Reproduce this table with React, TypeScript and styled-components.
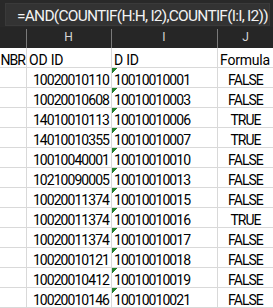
import React from "react";
import styled, { createGlobalStyle } from "styled-components";

const Global = createGlobalStyle`
  html, body { margin: 0; padding: 0; background: #ffffff; overflow: hidden; }
  body { font-family: Roboto, "Liberation Sans", sans-serif; }
`;

const COLS = "26px 85px 106px 57px";

const Page = styled.div`
  width: 273px;
  height: 308px;
  overflow: hidden;
  display: flex;
  flex-direction: column;
`;

const TopBar = styled.div`
  height: 31px;
  box-sizing: border-box;
  background: #292929;
  padding: 3px 3px 1px 5px;
  display: flex;
`;

const FormulaBox = styled.div`
  flex: 1;
  background: #333333;
  border: 1px solid #3a3a3a;
  box-sizing: border-box;
  display: flex;
  align-items: center;
  padding: 3px 0 0 11px;
  color: #f2f2f2;
  font-family: Roboto, "Liberation Sans", sans-serif;
  font-size: 15.5px;
  letter-spacing: -0.75px;
  white-space: nowrap;
  overflow: hidden;
`;

const HeaderRow = styled.div`
  height: 28px;
  background: #262626;
  display: grid;
  grid-template-columns: ${COLS};
`;

const HeaderCell = styled.div<{ $line?: boolean }>`
  display: flex;
  align-items: flex-end;
  justify-content: center;
  padding-bottom: 5px;
  box-sizing: border-box;
  color: #d6d6d6;
  font-size: 12px;
  line-height: 12px;
  background: ${(p) =>
    p.$line
      ? "linear-gradient(#7a7a7a, #7a7a7a) left bottom / 1px 19px no-repeat"
      : "none"};
`;

const Grid = styled.div`
  display: grid;
  grid-template-columns: ${COLS};
  grid-auto-rows: 20px;
`;

type Align = "left" | "right" | "center" | "end";

const Cell = styled.div<{
  $align: Align;
  $first?: boolean;
  $flag?: boolean;
  $label?: boolean;
}>`
  box-sizing: border-box;
  border-bottom: 1px solid #d9d9d9;
  border-left: ${(p) => (p.$first ? "none" : "1px solid #d9d9d9")};
  display: flex;
  align-items: flex-end;
  justify-content: ${(p) =>
    p.$align === "right" || p.$align === "end"
      ? "flex-end"
      : p.$align === "center"
      ? "center"
      : "flex-start"};
  padding: 0 ${(p) => (p.$align === "right" ? "2px" : "1px")} 0
    ${(p) => (p.$align === "left" ? "2px" : "0")};
  overflow: hidden;
  white-space: nowrap;
  color: #000000;
  font-size: 14px;
  line-height: 14px;
  letter-spacing: ${(p) => (p.$label ? "-0.2px" : "-0.95px")};
  background: ${(p) =>
    p.$flag
      ? "linear-gradient(135deg, #22802c 0 3.6px, transparent 3.6px) left top / 6px 6px no-repeat"
      : "none"};
`;

const rows: [string, string, string][] = [
  ["10020010110", "10010010001", "FALSE"],
  ["10020010608", "10010010003", "FALSE"],
  ["14010010113", "10010010006", "TRUE"],
  ["14010010355", "10010010007", "TRUE"],
  ["10010040001", "10010010010", "FALSE"],
  ["10210090005", "10010010013", "FALSE"],
  ["10020011374", "10010010015", "FALSE"],
  ["10020011374", "10010010016", "TRUE"],
  ["10020011374", "10010010017", "FALSE"],
  ["10020010121", "10010010018", "FALSE"],
  ["10020010412", "10010010019", "FALSE"],
  ["10020010146", "10010010021", "FALSE"],
];

export default function App() {
  return (
    <Page>
      <Global />
      <TopBar>
        <FormulaBox>=AND(COUNTIF(H:H, I2),COUNTIF(I:I, I2))</FormulaBox>
      </TopBar>
      <HeaderRow>
        <HeaderCell />
        <HeaderCell $line>H</HeaderCell>
        <HeaderCell $line>I</HeaderCell>
        <HeaderCell $line>J</HeaderCell>
      </HeaderRow>
      <Grid>
        <Cell $align="end" $first>
          NBR
        </Cell>
        <Cell $align="left" $label>
          OD ID
        </Cell>
        <Cell $align="left" $label>
          D ID
        </Cell>
        <Cell $align="left" $label>
          Formula
        </Cell>
        {rows.map(([od, d, f], i) => (
          <React.Fragment key={i}>
            <Cell $align="end" $first />
            <Cell $align="right">{od}</Cell>
            <Cell $align="left" $flag>
              {d}
            </Cell>
            <Cell $align="center">{f}</Cell>
          </React.Fragment>
        ))}
      </Grid>
    </Page>
  );
}
